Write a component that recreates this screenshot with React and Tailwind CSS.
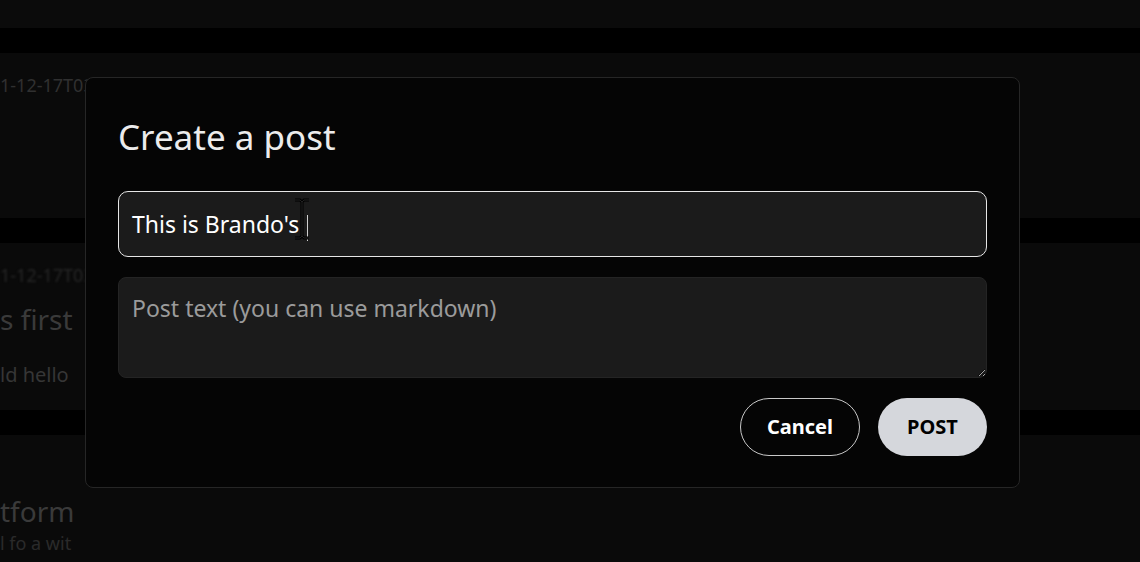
export default function App() {
  return (
    <div className="relative h-[562px] w-full overflow-hidden bg-black font-['Noto_Sans',sans-serif]">
      {/* Background feed (dimmed behind the modal) */}
      <div className="h-[28px] bg-[#0b0b0b]" />
      <div className="flex flex-col gap-[25px] pt-[25px]">
        <div className="h-[165px] bg-[#0a0a0a] pt-[20px]">
          <p className="text-[18px] leading-[24px] text-[#303030] whitespace-nowrap">1-12-17T03:20:41.845Z</p>
        </div>
        <div className="h-[167px] bg-[#0a0a0a] pt-[20px]">
          <p className="text-[18px] leading-[24px] text-[#262626] whitespace-nowrap blur-[1px]">1-12-17T03:</p>
          <p className="mt-[14px] text-[28px] leading-[36px] text-[#3a3a3a] whitespace-nowrap">s first</p>
          <p className="mt-[24px] text-[20px] leading-[28px] text-[#363636] whitespace-nowrap">ld hello</p>
        </div>
        <div className="h-[200px] bg-[#0a0a0a] pt-[58px]">
          <p className="text-[28px] leading-[36px] text-[#3a3a3a] whitespace-nowrap">tform</p>
          <p className="mt-[2px] text-[18px] leading-[24px] text-[#2a2a2a] whitespace-nowrap">l fo a wit</p>
        </div>
      </div>

      {/* Modal */}
      <div className="absolute left-[85px] top-[77px] w-[935px] rounded-[8px] border border-[#262626] bg-[#050505] px-[32px] pt-[37px] pb-[31px]">
        <h2 className="text-[35px] leading-[44px] text-[#ececec]">Create a post</h2>

        <div className="relative mt-[32px] flex h-[66px] items-center rounded-[10px] border border-[#e6e6e6] bg-[#1b1b1b] px-[13px]">
          <span className="text-[23px] text-white">This is Brando's</span>
          <span className="ml-[8px] mt-[8px] inline-block h-[26px] w-px bg-[#cfcfcf]" />
          {/* mouse I-beam */}
          <svg className="absolute left-[170px] top-[6px]" width="26" height="42" viewBox="0 0 26 42">
            <path d="M6 2h5l2 2 2-2h5M13 4v34M6 40h5l2-2 2 2h5" fill="none" stroke="#000" strokeWidth="3" />
            <path d="M6 2h5l2 2 2-2h5M13 4v34M6 40h5l2-2 2 2h5" fill="none" stroke="#222" strokeWidth="1" />
          </svg>
        </div>

        <textarea
          readOnly
          placeholder="Post text (you can use markdown)"
          className="mt-[20px] block h-[101px] w-full rounded-[8px] border border-[#242424] bg-[#1b1b1b] px-[13px] py-[14px] text-[23px] leading-[32px] text-white outline-none placeholder:text-[#9b9b9b]"
        />

        <div className="mt-[20px] flex justify-end gap-[18px]">
          <button className="h-[58px] w-[120px] rounded-full border border-[#c8c8c8] text-[20px] font-bold text-white">
            Cancel
          </button>
          <button className="h-[58px] w-[109px] rounded-full bg-[#d5d7dc] text-[20px] font-bold text-black">
            POST
          </button>
        </div>
      </div>
    </div>
  );
}
